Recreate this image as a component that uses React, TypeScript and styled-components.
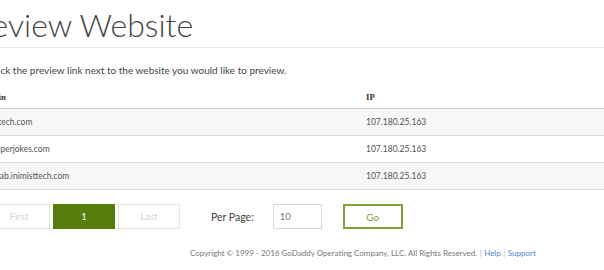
import React from "react";
import styled, { createGlobalStyle } from "styled-components";

const Global = createGlobalStyle`
  html, body { margin: 0; padding: 0; background: #fff; overflow: hidden; }
  body { font-family: "Lato", "Open Sans", sans-serif; color: #444; }
`;

const Page = styled.div`
  margin-left: -32px;
  width: 720px;
`;

const Title = styled.h1`
  margin: 0 0 0 -5px;
  padding: 5px 0 2px 0;
  font-family: "Lato", sans-serif;
  font-weight: 300;
  font-size: 32px;
  line-height: 40px;
  color: #444;
  border-bottom: 1px solid #e8e8e8;
`;

const Intro = styled.p`
  margin: 16px 0 0 21px;
  font-size: 10px;
  line-height: 13px;
  color: #444;
`;

const Table = styled.table`
  margin-top: 8px;
  width: 100%;
  border-collapse: collapse;
`;

const Th = styled.th<{ $w?: number }>`
  text-align: left;
  font-family: "Liberation Serif", serif;
  font-weight: bold;
  font-size: 8.8px;
  color: #333;
  padding: 0 0 0 8px;
  height: 23px;
  width: ${(p) => (p.$w ? `${p.$w}px` : "auto")};
  border-bottom: 1px solid #d4d4d4;
`;

const Row = styled.tr<{ $alt: boolean }>`
  background: ${(p) => (p.$alt ? "#f7f7f7" : "#fff")};
  border-bottom: 1px solid #d9d9d9;
`;

const Td = styled.td`
  font-size: 8.5px;
  color: #555;
  padding: 0 0 0 8px;
  height: 26px;
`;

const Pager = styled.div`
  display: flex;
  align-items: center;
  margin: 14px 0 0 20px;
`;

const PageBtn = styled.button<{ $active?: boolean }>`
  width: 62px;
  height: 25px;
  margin-right: 3px;
  box-sizing: border-box;
  font-family: "Lato", sans-serif;
  font-size: 9.5px;
  border: 1px solid ${(p) => (p.$active ? "#577d0c" : "#e2e8d4")};
  background: ${(p) => (p.$active ? "#577d0c" : "#fff")};
  color: ${(p) => (p.$active ? "#fff" : "#d2d2d2")};
  padding: 0;
`;

const Label = styled.span`
  margin-left: 28px;
  font-size: 10.5px;
  color: #444;
`;

const Input = styled.input`
  margin-left: 19px;
  width: 49px;
  height: 25px;
  box-sizing: border-box;
  border: 1px solid #d8d8d8;
  font-family: "Lato", sans-serif;
  font-size: 9.5px;
  color: #777;
  padding: 0 0 0 6px;
  outline: none;
`;

const GoBtn = styled.button`
  margin-left: 21px;
  width: 60px;
  height: 25px;
  box-sizing: border-box;
  border: 2px solid #7fa23d;
  background: #fff;
  color: #7fa23d;
  font-family: "Lato", sans-serif;
  font-size: 10px;
  padding: 0;
`;

const Footer = styled.div`
  margin: 19px 0 0 222px;
  font-size: 8px;
  color: #777;
  white-space: nowrap;
`;

const Sep = styled.span`
  color: #aaa;
  margin: 0 2.5px;
`;

const Link = styled.a`
  color: #5a7fd0;
  text-decoration: none;
`;

const rows = [
  "nimisttech.com",
  "bestsuperjokes.com",
  "www.lab.inimisttech.com",
];

export default function App() {
  return (
    <>
      <Global />
      <Page>
        <Title>Preview Website</Title>
        <Intro>Click the preview link next to the website you would like to preview.</Intro>
        <Table>
          <thead>
            <tr>
              <Th $w={382}>Domain</Th>
              <Th>IP</Th>
            </tr>
          </thead>
          <tbody>
            {rows.map((d, i) => (
              <Row key={d} $alt={i % 2 === 0}>
                <Td>{d}</Td>
                <Td>107.180.25.163</Td>
              </Row>
            ))}
          </tbody>
        </Table>
        <Pager>
          <PageBtn>First</PageBtn>
          <PageBtn $active>1</PageBtn>
          <PageBtn>Last</PageBtn>
          <Label>Per Page:</Label>
          <Input defaultValue="10" />
          <GoBtn>Go</GoBtn>
        </Pager>
        <Footer>
          Copyright © 1999 - 2016 GoDaddy Operating Company, LLC. All Rights Reserved.
          <Sep>|</Sep>
          <Link href="#">Help</Link>
          <Sep>|</Sep>
          <Link href="#">Support</Link>
        </Footer>
      </Page>
    </>
  );
}
